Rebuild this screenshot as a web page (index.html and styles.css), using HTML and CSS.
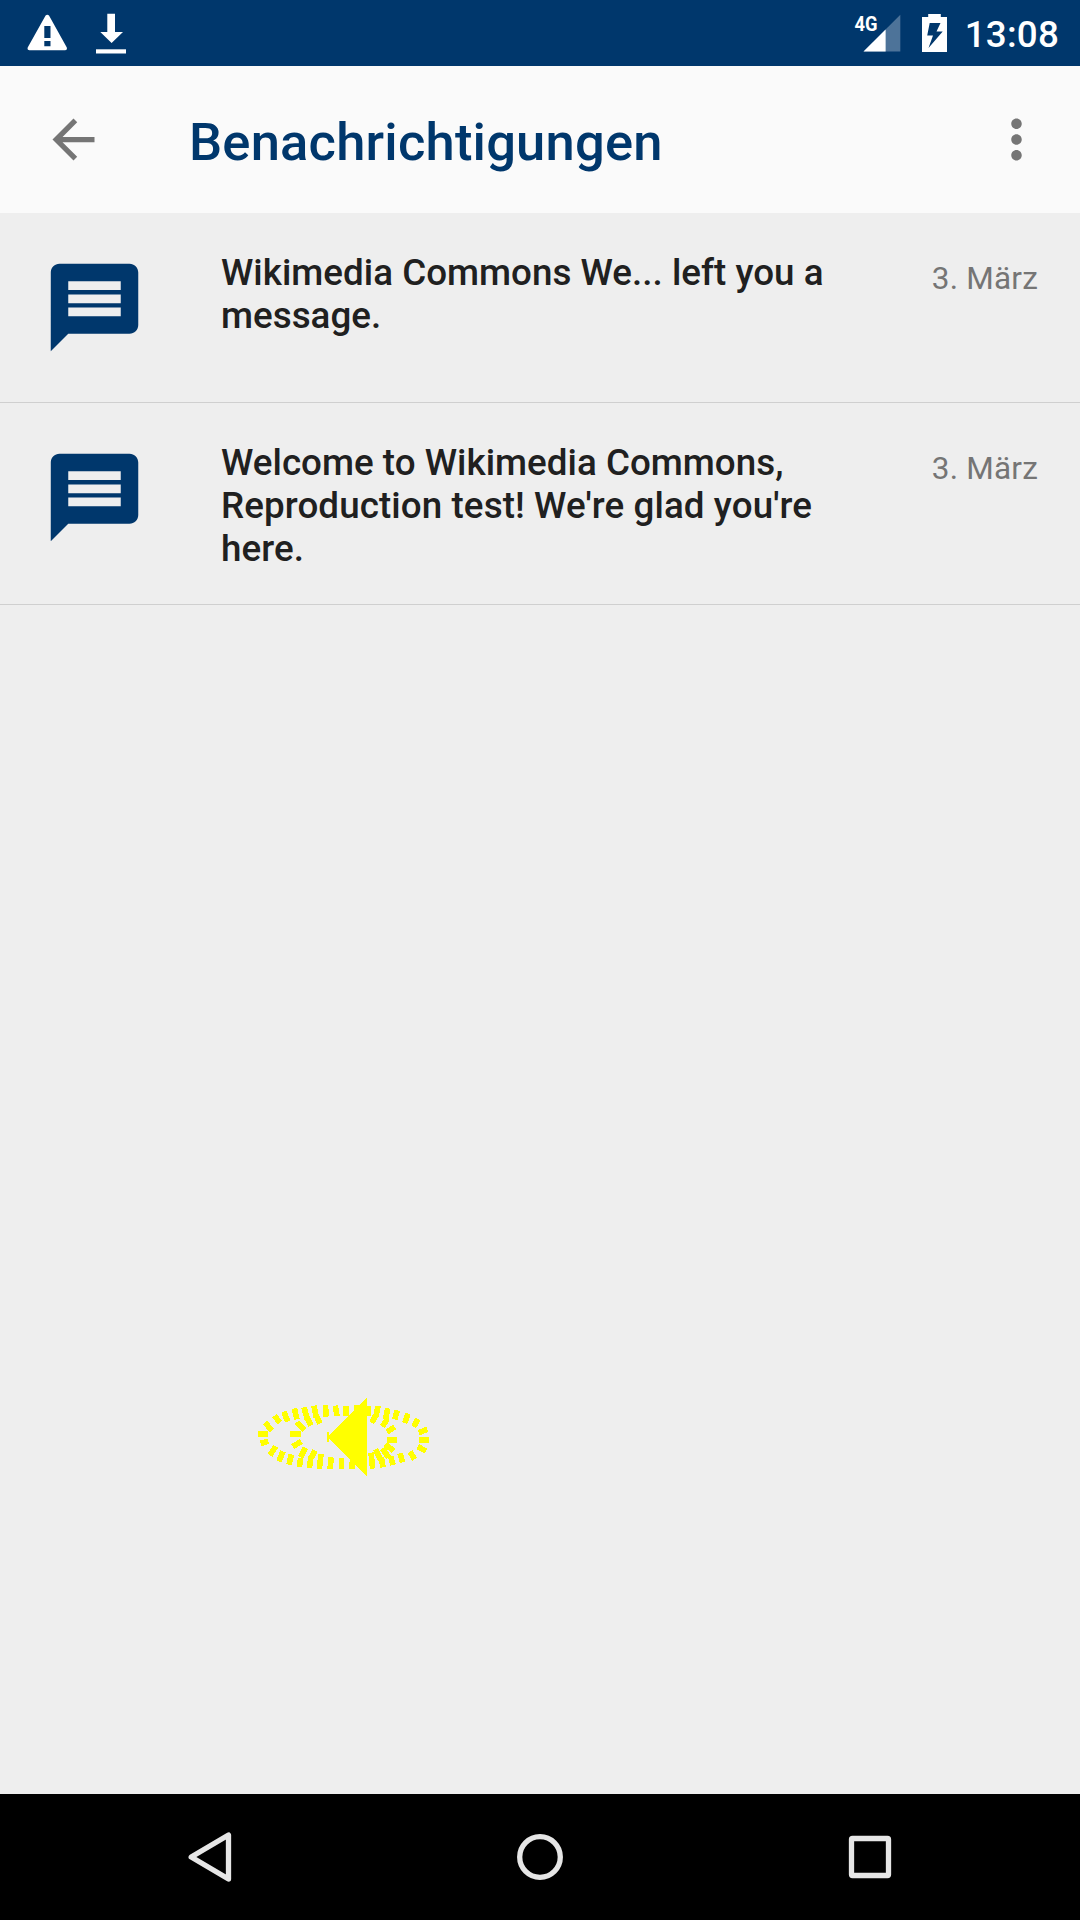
FILE: index.html
```html
<!DOCTYPE html>
<html lang="de">
<head>
<meta charset="utf-8">
<title>Benachrichtigungen</title>
<link rel="stylesheet" href="styles.css">
</head>
<body>
<div class="screen">
  <header class="status-bar">
    <svg class="status-icons" width="120" height="66" viewBox="0 0 120 66" fill="#fff">
      <path fill-rule="evenodd" d="M45.6 15.600Q47.300 13.800 49 15.600L66.800 47.500Q67.500 50.300 65 50.300H29.500Q27 50.300 27.700 47.500ZM44.300 26V38H50.500V26ZM44.300 41V46.300H50.500V41Z"/>
      <path d="M107.300 13.700H115V32H123L111.600 43L100.300 32H107.300Z"/>
      <path d="M96 49.300H126V53.500H96Z"/>
    </svg>
    <div class="status-right">
      <svg class="signal" width="50" height="66" viewBox="0 0 50 66">
        <path d="M46.300 14.700V51.500H9.500Z" fill="#4d7399"/>
        <path d="M31.600 29.400V51.500H9.500Z" fill="#fff"/>
        <text x="0.500" y="31.300" textLength="23" lengthAdjust="spacingAndGlyphs" class="network">4G</text>
      </svg>
      <svg class="battery" width="25" height="66" viewBox="0 0 25 66">
        <path fill="#fff" fill-rule="evenodd" d="M6.200 14H18.800V17H25V52H0V17H6.200ZM7.700 23L5.200 35.500H11L6.500 48L20.700 31.500H14.500L18.500 23Z"/>
      </svg>
      <span class="clock">13:08</span>
    </div>
  </header>

  <div class="toolbar">
    <svg class="icon" viewBox="0 0 24 24"><path d="M20 11H7.830l5.590-5.590L12 4l-8 8 8 8 1.410-1.410L7.830 13H20v-2z"/></svg>
    <h1 class="title">Benachrichtigungen</h1>
    <svg class="icon" viewBox="0 0 24 24"><path d="M12 8c1.100 0 2-.9 2-2s-.9-2-2-2-2 .9-2 2 .9 2 2 2zm0 2c-1.100 0-2 .9-2 2s.9 2 2 2 2-.9 2-2-.9-2-2-2zm0 6c-1.100 0-2 .9-2 2s.9 2 2 2 2-.9 2-2-.9-2-2-2z"/></svg>
  </div>

  <main class="list">
    <article class="row">
      <svg class="message-icon" viewBox="0 0 24 24"><path d="M20 2H4c-1.100 0-1.990.9-1.990 2L2 22l4-4h14c1.100 0 2-.9 2-2V4c0-1.100-.9-2-2-2zm-2 12H6v-2h12v2zm0-3H6V9h12v2zm0-3H6V6h12v2z"/></svg>
      <p class="message">Wikimedia Commons We... left you a<br>message.</p>
      <time class="date">3. März</time>
    </article>
    <article class="row row-tall">
      <svg class="message-icon" viewBox="0 0 24 24"><path d="M20 2H4c-1.100 0-1.990.9-1.990 2L2 22l4-4h14c1.100 0 2-.9 2-2V4c0-1.100-.9-2-2-2zm-2 12H6v-2h12v2zm0-3H6V9h12v2zm0-3H6V6h12v2z"/></svg>
      <p class="message">Welcome to Wikimedia Commons,<br><span class="loose">Reproduction test! We're glad you're<br>here.</span></p>
      <time class="date">3. März</time>
    </article>
  </main>

  <!-- Swipe gesture marker floating over the list -->
  <svg class="gesture" width="210" height="110" viewBox="0 0 630 330">
    <path fill="#ff0" d="M262 155h6v12L378 57l3-4V291L268 178v7h-6z"/>
    <g fill="none" stroke="#ff0" stroke-width="17">
      <path d="M75 128L96 151M103 107L120 128M132 95L143 125M163 85L171 118M192 82L202 118M222 77L229 112M256 76L259 110M286 77L291 108M318 78V108M350 75V108M383 78V108M414 78L408 110M443 85L437 118M472 91L464 118M504 101L494 129M534 117L521 140M562 148L536 158"/>
      <path d="M85 184L62 190M107 199L90 226M129 214L117 244M154 223L147 254M182 234L178 261M213 230L208 264M243 222L238 267M274 232L270 267M304 235V267M338 235L335 267M368 235V267M393 218L398 266M424 232L429 262M452 228L459 255M480 220L488 247M510 215L524 238M533 200L558 213"/>
      <path d="M55 162H84M538 179H567M151 162H182M441 179H471"/>
      <path d="M170 127L193 151M200 110L213 136M228 105L240 130M395 128L408 105M441 118L427 140M464 141L441 156M436 193L461 213M427 205L445 232M407 208L422 240M184 184L158 200M196 203L182 232M225 212L210 240"/>
    </g>
  </svg>

  <nav class="nav-bar">
    <svg width="60" height="60" viewBox="-30 -30 60 60"><path d="M-18.800 0L18.500-22V22Z"/></svg>
    <svg width="60" height="60" viewBox="-30 -30 60 60"><circle r="20.300"/></svg>
    <svg width="60" height="60" viewBox="-30 -30 60 60"><rect x="-18.500" y="-18.500" width="37" height="37" rx="1"/></svg>
  </nav>
</div>
</body>
</html>
```
FILE: styles.css
```css
* { box-sizing: border-box; }

body {
  margin: 0;
  font-family: Roboto, "Noto Sans", sans-serif;
}

.screen {
  position: relative;
  display: flex;
  flex-direction: column;
  width: 1080px;
  height: 1920px;
  overflow: hidden;
  background: #eeeeee;
}

svg { display: block; flex: none; }

.status-bar {
  display: flex;
  justify-content: space-between;
  height: 66px;
  padding-right: 21px;
  background: #00376c;
  color: #fff;
}

.status-icons { overflow: visible; }

.status-right {
  display: flex;
  align-items: center;
}

.signal { margin-right: 18px; }

.network {
  font-size: 21px;
  font-weight: 700;
  fill: #fff;
}

.battery { margin-right: 18px; }

.clock {
  padding-top: 3px;
  font-size: 36.75px;
  font-weight: 500;
  letter-spacing: 0.2px;
  line-height: 44px;
}

.toolbar {
  display: flex;
  align-items: center;
  height: 147px;
  padding: 0 32px 0 42px;
  background: #fafafa;
}

.icon {
  width: 63px;
  height: 63px;
  fill: #757575;
}

.title {
  flex: 1;
  margin: 0;
  padding: 4px 0 0 84px;
  color: #00376c;
  font-size: 52.5px;
  font-weight: 500;
  letter-spacing: 0.2px;
  line-height: 62px;
}

.list {
  display: flex;
  flex: 1;
  flex-direction: column;
}

.row {
  display: flex;
  align-items: flex-start;
  height: 190px;
  padding: 38px 42px 0;
  border-bottom: 1px solid #cfcfcf;
}

.row-tall { height: 202px; }

.message-icon {
  width: 105px;
  height: 105px;
  margin: 3.6px 74px 0 0;
  fill: #00376c;
}

.message {
  flex: 1;
  margin: 0;
  color: #202020;
  font-size: 36.75px;
  font-weight: 500;
  letter-spacing: 0.02px;
  line-height: 43px;
  white-space: nowrap;
}

.loose { letter-spacing: 0.1px; }

.date {
  margin-top: 9px;
  color: #757575;
  font-size: 31.5px;
  letter-spacing: 0.2px;
  line-height: 37px;
}

.gesture {
  position: absolute;
  left: 240px;
  top: 1380px;
  shape-rendering: crispEdges;
}

.nav-bar {
  display: flex;
  align-items: center;
  justify-content: center;
  gap: 270px;
  height: 126px;
  background: #000;
}

.nav-bar svg {
  fill: none;
  stroke: #e6e6e6;
  stroke-width: 5.3;
  stroke-linejoin: round;
}
```
